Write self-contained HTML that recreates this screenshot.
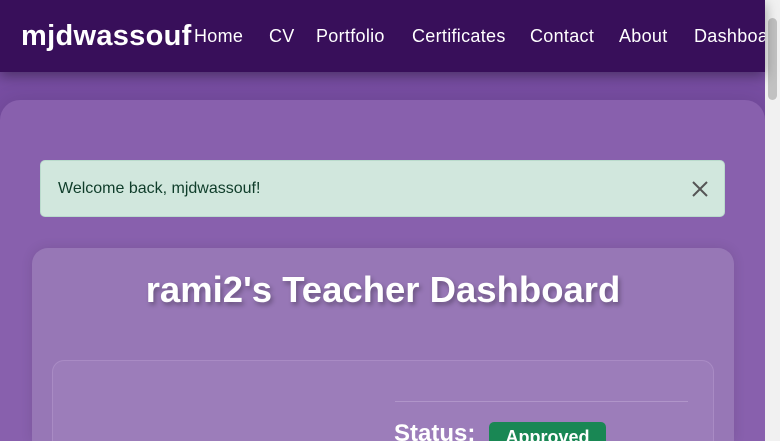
<!DOCTYPE html>
<html><head><style>
html,body{margin:0;padding:0;width:780px;height:441px;overflow:hidden;font-family:"Liberation Sans",sans-serif;}
body{background:linear-gradient(#744a9f,#8058a8);position:relative;}
.nav{position:absolute;left:0;top:0;width:765px;height:72px;background:#380f5a;box-shadow:0 4px 12px rgba(0,0,0,.35);z-index:2;overflow:hidden;}
.brand{position:absolute;left:21px;top:20px;color:#fff;font-weight:bold;font-size:29px;letter-spacing:0.3px;}
.links span{position:absolute;top:26px;color:#fff;font-size:18px;white-space:nowrap;letter-spacing:0.3px;}
.sb{position:absolute;right:0;top:0;width:15px;height:441px;background:#f1f1f1;}
.thumb{position:absolute;right:3px;top:18px;width:9px;height:82px;background:#c1c1c1;border-radius:5px;}
.outer{position:absolute;left:0;top:100px;width:765px;height:341px;background:#8860ad;border-radius:20px 20px 0 0;box-shadow:0 0 20px rgba(0,0,0,.1);}
.alert{position:absolute;left:40px;top:160px;width:683px;height:55px;background:#d1e7dd;border:1px solid #badbcc;border-radius:5px;color:#0f3d2a;font-size:16px;}
.alert .t{position:absolute;left:17px;top:19px;}
.alert .x{position:absolute;right:14px;top:18px;}
.card{position:absolute;left:32px;top:248px;width:702px;height:193px;background:#9777b6;border-radius:16px 16px 0 0;box-shadow:0 0 12px rgba(0,0,0,.1);}
h1{position:absolute;left:32px;width:702px;top:269px;margin:0;text-align:center;color:#fff;font-size:36.5px;font-weight:bold;text-shadow:2px 3px 5px rgba(0,0,0,.3);}
.inner{position:absolute;left:52px;top:360px;width:660px;height:81px;background:#9c7dba;border:1px solid #a98bc4;border-bottom:none;border-radius:12px 12px 0 0;}
.line{position:absolute;left:395px;top:401px;width:293px;height:1px;background:#b095c9;}
.status{position:absolute;left:394px;top:420px;color:#fff;font-weight:bold;font-size:24px;}
.badge{position:absolute;left:489px;top:422px;width:117px;height:30px;background:#198754;border-radius:5px;color:#fff;font-weight:bold;font-size:18px;text-align:center;line-height:30px;}
</style></head><body>
<div class="outer"></div>
<div class="alert"><span class="t">Welcome back, mjdwassouf!</span>
<svg class="x" width="20" height="20" viewBox="0 0 20 20"><path d="M3 3L17 17M17 3L3 17" stroke="#555" stroke-width="2"/></svg></div>
<div class="card"></div>
<h1>rami2's Teacher Dashboard</h1>
<div class="inner"></div>
<div class="line"></div>
<div class="status">Status:</div>
<div class="badge">Approved</div>
<div class="nav"><div class="brand">mjdwassouf</div>
<div class="links"><span style="left:194px">Home</span><span style="left:269px">CV</span><span style="left:316px">Portfolio</span><span style="left:412px">Certificates</span><span style="left:530px">Contact</span><span style="left:619px">About</span><span style="left:694px">Dashboard</span></div></div>
<div class="sb"><div class="thumb"></div></div>
</body></html>
